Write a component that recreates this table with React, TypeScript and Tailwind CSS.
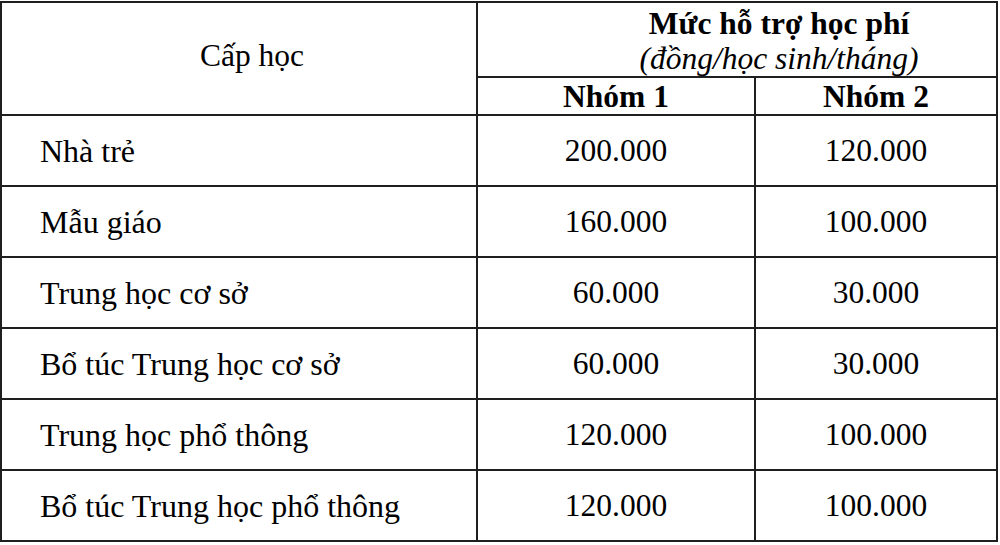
const rows = [
  { name: 'Nhà trẻ', g1: '200.000', g2: '120.000' },
  { name: 'Mẫu giáo', g1: '160.000', g2: '100.000' },
  { name: 'Trung học cơ sở', g1: '60.000', g2: '30.000' },
  { name: 'Bổ túc Trung học cơ sở', g1: '60.000', g2: '30.000' },
  { name: 'Trung học phổ thông', g1: '120.000', g2: '100.000' },
  { name: 'Bổ túc Trung học phổ thông', g1: '120.000', g2: '100.000' },
];

export default function App() {
  return (
    <div className="w-[1000px] h-[545px] bg-white pt-px font-['Liberation_Serif','Times_New_Roman',serif] text-[31.5px] text-black">
      <table className="w-[998px] table-fixed border-collapse border-2 border-[#1f1f1f]">
        <colgroup>
          <col className="w-[476px]" />
          <col className="w-[278px]" />
          <col />
        </colgroup>
        <thead>
          <tr className="h-[75px]">
            <th
              rowSpan={2}
              className="border-2 border-[#1f1f1f] pl-[26px] pb-[6px] text-center align-middle font-normal leading-none"
            >
              Cấp học
            </th>
            <th
              colSpan={2}
              className="border-2 border-[#1f1f1f] pl-[84px] pt-[2px] text-center align-middle leading-[35px]"
            >
              <div className="font-bold">Mức hỗ trợ học phí</div>
              <div className="font-normal italic">(đồng/học sinh/tháng)</div>
            </th>
          </tr>
          <tr className="h-[38px]">
            <th className="border-2 border-[#1f1f1f] pt-[2px] text-center align-middle font-bold leading-none">
              Nhóm 1
            </th>
            <th className="border-2 border-[#1f1f1f] pt-[2px] text-center align-middle font-bold leading-none">
              Nhóm 2
            </th>
          </tr>
        </thead>
        <tbody>
          {rows.map((r) => (
            <tr key={r.name} className="h-[71px]">
              <td className="border-2 border-[#1f1f1f] pl-[38px] align-middle text-[32px] leading-none">
                {r.name}
              </td>
              <td className="border-2 border-[#1f1f1f] text-center align-middle leading-none">
                {r.g1}
              </td>
              <td className="border-2 border-[#1f1f1f] text-center align-middle leading-none">
                {r.g2}
              </td>
            </tr>
          ))}
        </tbody>
      </table>
    </div>
  );
}
